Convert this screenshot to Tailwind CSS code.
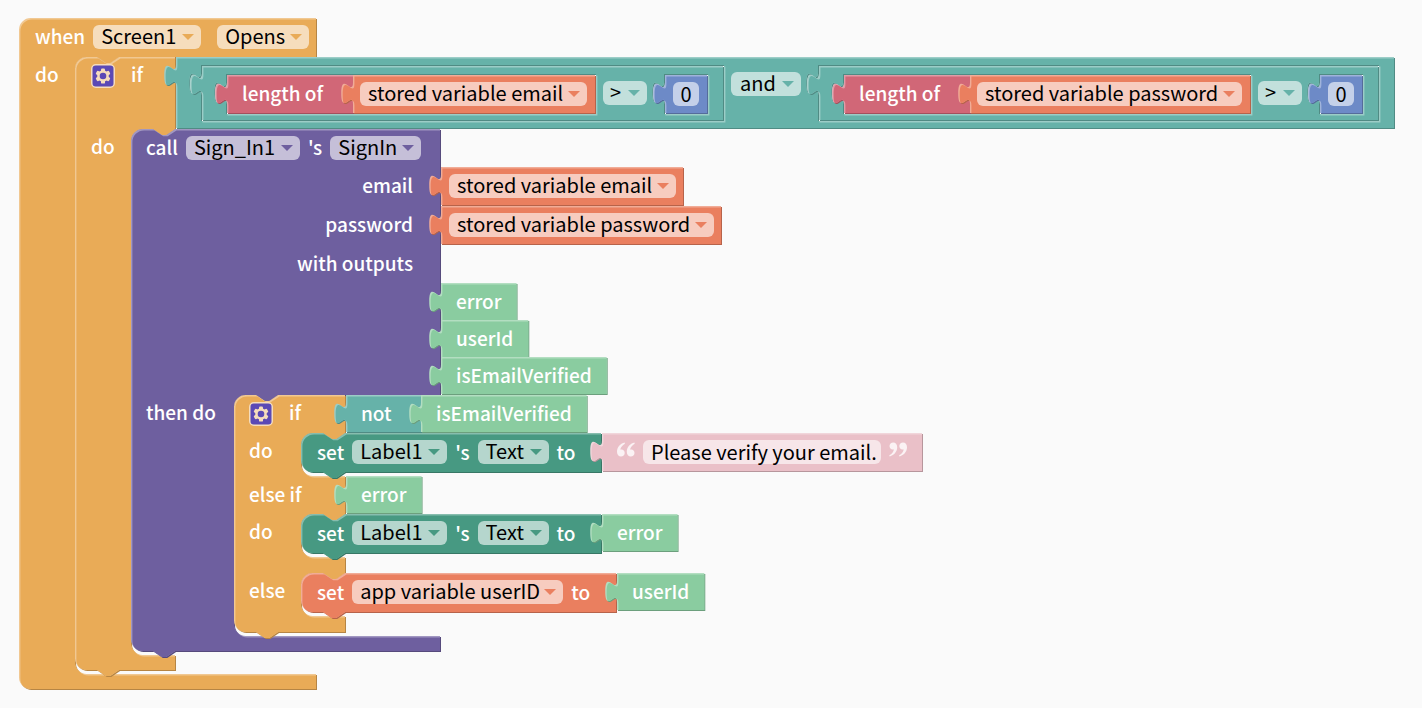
<!DOCTYPE html>
<html lang="en">
<head>
<meta charset="utf-8">
<title>Blocks workspace</title>
<script src="https://cdn.jsdelivr.net/npm/@tailwindcss/browser@4"></script>
</head>
<body class="min-h-screen bg-[#fafafa] font-['Noto_Sans_CJK_SC','Noto_Sans',sans-serif] text-[19px] leading-6 font-medium text-white">
<svg class="hidden" aria-hidden="true">
  <symbol id="caret" viewBox="0 0 12 6"><path d="M0 0H12L6 6Z" fill="currentColor"/></symbol>
  <symbol id="gear" viewBox="0 0 24 24">
    <rect x=".75" y=".75" width="22.5" height="22.5" rx="4" fill="#5b49b5" stroke="#f6ddbc" stroke-width="1.5"/>
    <g fill="#f6ddbc">
      <circle cx="12" cy="12" r="5.8"/>
      <g id="tooth"><rect x="10" y="4.400" width="4" height="15.200" rx="1.2"/></g>
      <use href="#tooth" transform="rotate(60 12 12)"/>
      <use href="#tooth" transform="rotate(120 12 12)"/>
    </g>
    <circle cx="12" cy="12" r="3.300" fill="#5b49b5"/>
  </symbol>
  <symbol id="quote" viewBox="0 0 18 15">
    <path d="M7.6.6C4 1.500 0 4.800 0 9.800C0 12.800 1.700 14.600 4 14.600C6.100 14.600 7.700 13.100 7.700 11C7.700 9 6.300 7.600 4.400 7.600C3.900 7.600 3.500 7.700 3.300 7.800C3.500 5.500 5.400 3 7.900 1.700Z" fill="currentColor"/>
    <path transform="translate(9.800)" d="M7.6.6C4 1.500 0 4.800 0 9.800C0 12.800 1.700 14.600 4 14.600C6.100 14.600 7.700 13.100 7.700 11C7.700 9 6.300 7.600 4.400 7.600C3.900 7.600 3.500 7.700 3.300 7.800C3.500 5.500 5.400 3 7.900 1.700Z" fill="currentColor"/>
  </symbol>
</svg>

<main class="px-[19px] pt-[18px]">
  <!-- when Screen1 Opens -->
  <section data-block="event" data-color="#e9ab57" class="relative isolate w-[297px]">
    <div class="flex h-[39px] items-center pb-0.5 pl-4">
      <span class="pb-0.5">when</span>
      <span class="relative ml-2 flex h-6 items-center rounded-md bg-white/60 text-[#e9ab57]"><select aria-label="Screen" class="h-8 appearance-none pr-6 pb-0.5 pl-2 text-[20px] leading-[30px] font-normal text-black"><option>Screen1</option></select><svg class="pointer-events-none absolute right-[7px] h-1.5 w-3"><use href="#caret"/></svg></span>
      <span class="relative ml-4 flex h-6 items-center rounded-md bg-white/60 text-[#e9ab57]"><select aria-label="Event" class="h-8 appearance-none pr-6 pb-0.5 pl-2 text-[20px] leading-[30px] font-normal text-black"><option>Opens</option></select><svg class="pointer-events-none absolute right-[7px] h-1.5 w-3"><use href="#caret"/></svg></span>
    </div>
    <div class="flex">
      <div class="h-[38px] w-14 shrink-0 pt-[5px] pl-4">do</div>
      <div data-slot class="shrink-0 pb-1">

        <!-- if stored values are present -->
        <section data-block="stack" data-color="#e9ab57" class="relative isolate w-[100px]">
          <div class="flex h-[72px]">
            <div class="flex w-full shrink-0 items-start pl-4">
              <button aria-label="Configure if block" class="mt-[7px] h-6 w-6"><svg class="h-6 w-6"><use href="#gear"/></svg></button>
              <span class="mt-[5px] ml-4">if</span>
            </div>
            <div data-block="value" data-color="#66b2a9" class="relative isolate ml-px flex h-[71px] shrink-0 items-start pt-[9px] pr-4 pl-[26px]">
              <div data-block="value" data-inline data-color="#66b2a9" class="relative isolate flex h-[54px] shrink-0 items-start pt-[9px] pr-4 pl-[25px]">
                <div data-inline class="flex h-[38px] shrink-0">
                  <div data-block="value" data-color="#d16777" class="relative isolate flex h-full w-[126px] shrink-0 items-center pb-0.5 pl-[15px]">length of</div>
                  <div data-block="value" data-color="#ea7f5f" class="relative isolate flex h-full shrink-0 items-center pr-2 pl-[7px]">
                    <span class="relative flex h-6 items-center rounded-md bg-white/60 text-[#ea7f5f]"><select aria-label="Stored variable" class="h-8 appearance-none pr-[23px] pb-0.5 pl-2 text-[20px] leading-[30px] font-normal text-black"><option>stored variable email</option></select><svg class="pointer-events-none absolute right-[7px] h-1.5 w-3"><use href="#caret"/></svg></span>
                  </div>
                </div>
                <span class="relative mt-1.5 ml-2 flex h-6 items-center rounded-md bg-white/60 text-[#66b2a9]"><select aria-label="Comparison" class="h-8 appearance-none pr-[25px] pb-0.5 pl-[7px] text-[20px] leading-[30px] font-normal text-black"><option>&gt;</option></select><svg class="pointer-events-none absolute right-[7px] h-1.5 w-3"><use href="#caret"/></svg></span>
                <div data-block="value" data-inline data-color="#6d8ac7" class="relative isolate ml-[18px] flex h-[38px] shrink-0 items-center px-2">
                  <span class="flex h-6 items-center rounded-md bg-white/60"><input aria-label="Number" value="0" class="h-8 w-[26px] pb-0.5 text-center text-[20px] leading-[30px] font-normal text-black"></span>
                </div>
              </div>
              <span class="relative mt-1.5 ml-2 flex h-6 items-center rounded-md bg-white/60 text-[#66b2a9]"><select aria-label="Logic operator" class="h-8 appearance-none pr-[25px] pb-0.5 pl-[9px] text-[20px] leading-[30px] font-normal text-black"><option>and</option></select><svg class="pointer-events-none absolute right-[7px] h-1.5 w-3"><use href="#caret"/></svg></span>
              <div data-block="value" data-inline data-color="#66b2a9" class="relative isolate ml-[18px] flex h-[54px] shrink-0 items-start pt-[9px] pr-4 pl-[25px]">
                <div data-inline class="flex h-[38px] shrink-0">
                  <div data-block="value" data-color="#d16777" class="relative isolate flex h-full w-[126px] shrink-0 items-center pb-0.5 pl-[15px]">length of</div>
                  <div data-block="value" data-color="#ea7f5f" class="relative isolate flex h-full shrink-0 items-center pr-2 pl-[7px]">
                    <span class="relative flex h-6 items-center rounded-md bg-white/60 text-[#ea7f5f]"><select aria-label="Stored variable" class="h-8 appearance-none pr-[23px] pb-0.5 pl-2 text-[20px] leading-[30px] font-normal text-black"><option>stored variable password</option></select><svg class="pointer-events-none absolute right-[7px] h-1.5 w-3"><use href="#caret"/></svg></span>
                  </div>
                </div>
                <span class="relative mt-1.5 ml-2 flex h-6 items-center rounded-md bg-white/60 text-[#66b2a9]"><select aria-label="Comparison" class="h-8 appearance-none pr-[25px] pb-0.5 pl-[7px] text-[20px] leading-[30px] font-normal text-black"><option>&gt;</option></select><svg class="pointer-events-none absolute right-[7px] h-1.5 w-3"><use href="#caret"/></svg></span>
                <div data-block="value" data-inline data-color="#6d8ac7" class="relative isolate ml-[18px] flex h-[38px] shrink-0 items-center px-2">
                  <span class="flex h-6 items-center rounded-md bg-white/60"><input aria-label="Number" value="0" class="h-8 w-[26px] pb-0.5 text-center text-[20px] leading-[30px] font-normal text-black"></span>
                </div>
              </div>
            </div>
          </div>
          <div class="flex">
            <div class="w-14 shrink-0 pt-[5px] pl-4">do</div>
            <div data-slot class="shrink-0 pb-1">

              <!-- call Sign_In1's SignIn -->
              <section data-block="stack" data-color="#6e5f9f" class="relative isolate w-[309px]">
                <div class="flex h-[38px] items-center pl-[15px]">
                  <span class="pb-0.5">call</span>
                  <span class="relative ml-2 flex h-6 items-center rounded-md bg-white/60 text-[#6e5f9f]"><select aria-label="Component" class="h-8 appearance-none pr-6 pb-0.5 pl-2 text-[20px] leading-[30px] font-normal text-black"><option>Sign_In1</option></select><svg class="pointer-events-none absolute right-[7px] h-1.5 w-3"><use href="#caret"/></svg></span>
                  <span class="ml-2 pb-0.5">'s</span>
                  <span class="relative ml-2 flex h-6 items-center rounded-md bg-white/60 text-[#6e5f9f]"><select aria-label="Method" class="h-8 appearance-none pr-6 pb-0.5 pl-2 text-[20px] leading-[30px] font-normal text-black"><option>SignIn</option></select><svg class="pointer-events-none absolute right-[7px] h-1.5 w-3"><use href="#caret"/></svg></span>
                </div>
                <div class="flex h-[39px]">
                  <div class="flex w-full shrink-0 items-center justify-end pr-[27px] pb-1">email</div>
                  <div data-block="value" data-color="#ea7f5f" class="relative isolate ml-px flex h-[38px] shrink-0 items-center pr-[7px] pl-2">
                    <span class="relative flex h-6 items-center rounded-md bg-white/60 text-[#ea7f5f]"><select aria-label="Email value" class="h-8 appearance-none pr-[23px] pb-0.5 pl-2 text-[20px] leading-[30px] font-normal text-black"><option>stored variable email</option></select><svg class="pointer-events-none absolute right-[7px] h-1.5 w-3"><use href="#caret"/></svg></span>
                  </div>
                </div>
                <div class="flex h-[39px]">
                  <div class="flex w-full shrink-0 items-center justify-end pr-[27px] pb-1">password</div>
                  <div data-block="value" data-color="#ea7f5f" class="relative isolate ml-px flex h-[38px] shrink-0 items-center pr-[7px] pl-2">
                    <span class="relative flex h-6 items-center rounded-md bg-white/60 text-[#ea7f5f]"><select aria-label="Password value" class="h-8 appearance-none pr-[23px] pb-0.5 pl-2 text-[20px] leading-[30px] font-normal text-black"><option>stored variable password</option></select><svg class="pointer-events-none absolute right-[7px] h-1.5 w-3"><use href="#caret"/></svg></span>
                  </div>
                </div>
                <div class="flex h-[38px] items-center justify-end pr-[27px] pb-0.5">with outputs</div>
                <div class="flex flex-col items-start pb-px pl-[310px]">
                  <div data-block="value" data-color="#8acca0" class="relative isolate flex h-[37px] shrink-0 items-center px-[15px] pb-0.5">error</div>
                  <div data-block="value" data-color="#8acca0" class="relative isolate flex h-[37px] shrink-0 items-center px-[15px] pb-0.5">userId</div>
                  <div data-block="value" data-color="#8acca0" class="relative isolate flex h-[37px] shrink-0 items-center px-[15px] pb-0.5">isEmailVerified</div>
                </div>
                <div class="flex">
                  <div class="w-[103px] shrink-0 pt-[5px] pl-[15px] whitespace-nowrap">then do</div>
                  <div data-slot class="shrink-0 pb-1">

                    <!-- if / else if / else -->
                    <section data-block="stack" data-color="#e9ab57" class="relative isolate w-[111px]">
                      <div class="flex h-[38px]">
                        <div class="flex w-full shrink-0 items-start pl-[15px]">
                          <button aria-label="Configure if block" class="mt-[7px] h-6 w-6"><svg class="h-6 w-6"><use href="#gear"/></svg></button>
                          <span class="mt-[5px] ml-4">if</span>
                        </div>
                        <div data-block="value" data-color="#66b2a9" class="relative isolate ml-px flex h-[37px] w-[75px] shrink-0 items-center pb-0.5 pl-[15px]">not</div>
                        <div data-block="value" data-color="#8acca0" class="relative isolate flex h-[37px] shrink-0 items-center px-[15px] pb-0.5">isEmailVerified</div>
                      </div>
                      <div class="flex">
                        <div class="w-[67px] shrink-0 pt-[5px] pl-[15px]">do</div>
                        <div data-slot class="shrink-0 pb-1">
                          <div class="flex">
                            <section data-block="stack" data-color="#479982" class="relative isolate flex h-[39px] w-[300px] shrink-0 items-center pb-0.5 pl-4">
                              <span>set</span>
                              <span class="relative ml-2 flex h-6 items-center rounded-md bg-white/60 text-[#479982]"><select aria-label="Component" class="h-8 appearance-none pr-6 pb-0.5 pl-2 text-[20px] leading-[30px] font-normal text-black"><option>Label1</option></select><svg class="pointer-events-none absolute right-[7px] h-1.5 w-3"><use href="#caret"/></svg></span>
                              <span class="ml-2">'s</span>
                              <span class="relative ml-2 flex h-6 items-center rounded-md bg-white/60 text-[#479982]"><select aria-label="Property" class="h-8 appearance-none pr-6 pb-0.5 pl-2 text-[20px] leading-[30px] font-normal text-black"><option>Text</option></select><svg class="pointer-events-none absolute right-[7px] h-1.5 w-3"><use href="#caret"/></svg></span>
                              <span class="ml-2">to</span>
                            </section>
                            <div data-block="value" data-color="#eac0c8" class="relative isolate ml-px flex h-[38px] shrink-0 items-center gap-2 px-[15px]">
                              <svg class="-mt-1.5 h-[15px] w-[18px] text-white/80"><use href="#quote"/></svg>
                              <span class="flex h-6 items-center rounded-md bg-white/60"><input aria-label="Text" value="Please verify your email." class="h-8 w-[238px] pb-0.5 pl-2 text-[20px] leading-[30px] font-normal text-black"></span>
                              <svg class="-mt-1.5 h-[15px] w-[18px] rotate-180 text-white/80"><use href="#quote"/></svg>
                            </div>
                          </div>
                        </div>
                      </div>
                      <div class="flex h-[38px]">
                        <div class="flex w-full shrink-0 items-center pb-0.5 pl-[15px] whitespace-nowrap">else if</div>
                        <div data-block="value" data-color="#8acca0" class="relative isolate ml-px flex h-[37px] shrink-0 items-center px-[15px] pb-0.5">error</div>
                      </div>
                      <div class="flex">
                        <div class="w-[67px] shrink-0 pt-[5px] pl-[15px]">do</div>
                        <div data-slot class="shrink-0 pb-1">
                          <div class="flex">
                            <section data-block="stack" data-color="#479982" class="relative isolate flex h-[39px] w-[300px] shrink-0 items-center pb-0.5 pl-4">
                              <span>set</span>
                              <span class="relative ml-2 flex h-6 items-center rounded-md bg-white/60 text-[#479982]"><select aria-label="Component" class="h-8 appearance-none pr-6 pb-0.5 pl-2 text-[20px] leading-[30px] font-normal text-black"><option>Label1</option></select><svg class="pointer-events-none absolute right-[7px] h-1.5 w-3"><use href="#caret"/></svg></span>
                              <span class="ml-2">'s</span>
                              <span class="relative ml-2 flex h-6 items-center rounded-md bg-white/60 text-[#479982]"><select aria-label="Property" class="h-8 appearance-none pr-6 pb-0.5 pl-2 text-[20px] leading-[30px] font-normal text-black"><option>Text</option></select><svg class="pointer-events-none absolute right-[7px] h-1.5 w-3"><use href="#caret"/></svg></span>
                              <span class="ml-2">to</span>
                            </section>
                            <div data-block="value" data-color="#8acca0" class="relative isolate ml-px flex h-[37px] shrink-0 items-center px-[15px] pb-0.5">error</div>
                          </div>
                        </div>
                      </div>
                      <div class="h-4"></div>
                      <div class="flex">
                        <div class="w-[67px] shrink-0 pt-[5px] pl-[15px]">else</div>
                        <div data-slot class="shrink-0 pb-1">
                          <div class="flex">
                            <section data-block="stack" data-color="#ea7f5f" class="relative isolate flex h-[39px] w-[315px] shrink-0 items-center pb-0.5 pl-4">
                              <span>set</span>
                              <span class="relative ml-2 flex h-6 items-center rounded-md bg-white/60 text-[#ea7f5f]"><select aria-label="App variable" class="h-8 appearance-none pr-[23px] pb-0.5 pl-2 text-[20px] leading-[30px] font-normal text-black"><option>app variable userID</option></select><svg class="pointer-events-none absolute right-[7px] h-1.5 w-3"><use href="#caret"/></svg></span>
                              <span class="ml-2">to</span>
                            </section>
                            <div data-block="value" data-color="#8acca0" class="relative isolate ml-px flex h-[37px] shrink-0 items-center px-[15px] pb-0.5">userId</div>
                          </div>
                        </div>
                      </div>
                      <div class="h-4"></div>
                    </section>
                  </div>
                </div>
                <div class="h-[15px]"></div>
              </section>
            </div>
          </div>
          <div class="h-[15px]"></div>
        </section>
      </div>
    </div>
    <div class="h-[15px]"></div>
  </section>
</main>

<script>
// Draws the outline of every block from its laid-out size.
const S = 1.47, R = 8 * S, NS = 'http://www.w3.org/2000/svg';
const n = (...v) => v.map(x => +(x * S).toFixed(2)).join(' ');
const NOTCH_LR = `l${n(6, 4)} h${n(3)} l${n(6, -4)}`;
const NOTCH_RL = `l${n(-6, 4)} h${n(-3)} l${n(-6, -4)}`;
const TAB_UP = `c${n(0, -10, -8, 8, -8, -7.5)} s${n(8, 2.5, 8, -7.5)}`;

const valuePath = (x, y, w, h) =>
  `M${x} ${y}H${x + w}V${y + h}H${x}V${y + 20 * S}${TAB_UP}V${y}Z`;

function stackPath(w, h, slots, hasNotch) {
  let d = `M0 ${R}A${R} ${R} 0 0 1 ${R} 0`;
  if (hasNotch) d += `H${15 * S}${NOTCH_LR}`;
  d += `H${w}`;
  for (const s of slots) {
    d += `V${s.top}H${s.left + 30 * S}${NOTCH_RL}H${s.left + R}`
       + `a${R} ${R} 0 0 0 ${-R} ${R}V${s.bottom - R}a${R} ${R} 0 0 0 ${R} ${R}H${w}`;
  }
  d += `V${h}`;
  if (hasNotch) d += `H${30 * S}${NOTCH_RL}`;
  return d + `H${R}A${R} ${R} 0 0 1 0 ${h - R}Z`;
}

function add(parent, name, attrs) {
  const el = document.createElementNS(NS, name);
  for (const k in attrs) el.setAttribute(k, attrs[k]);
  return parent.appendChild(el);
}

function drawBlock(block, i) {
  const b = block.getBoundingClientRect(), color = block.dataset.color;
  const own = el => el.parentElement.closest('[data-block]') === block;
  let d;
  if (block.dataset.block === 'value') {
    d = valuePath(0, 0, b.width, b.height);
    for (const el of block.querySelectorAll('[data-inline]')) {
      if (!own(el)) continue;
      const r = el.getBoundingClientRect();
      d += valuePath(r.left - b.left - 1, r.top - b.top - 1, r.width + 2, r.height + 2);
    }
  } else {
    const slots = [...block.querySelectorAll('[data-slot]')].filter(own).map(el => {
      const r = el.getBoundingClientRect();
      return { left: r.left - b.left, top: r.top - b.top, bottom: r.bottom - b.top };
    });
    d = stackPath(b.width, b.height, slots, block.dataset.block === 'stack');
  }
  block.querySelector(':scope > [data-outline]')?.remove();
  const svg = document.createElementNS(NS, 'svg');
  svg.setAttribute('class', 'pointer-events-none absolute inset-0 -z-10 h-full w-full overflow-visible');
  svg.setAttribute('data-outline', '');
  svg.setAttribute('aria-hidden', 'true');
  const clip = add(svg, 'clipPath', { id: 'outline' + i });
  add(clip, 'path', { d, 'clip-rule': 'evenodd' });
  add(svg, 'path', { d, 'fill-rule': 'evenodd', transform: 'translate(1 1)', style: `fill:color-mix(in srgb, ${color}, black 22%)` });
  add(svg, 'path', { d, 'fill-rule': 'evenodd', style: `fill:color-mix(in srgb, ${color}, white 35%)` });
  const g = add(svg, 'g', { 'clip-path': `url(#outline${i})` });
  add(g, 'path', { d, 'fill-rule': 'evenodd', fill: color, transform: 'translate(1.4 1.4)' });
  block.prepend(svg);
}

const blocks = [...document.querySelectorAll('[data-block]')];
const drawAll = () => blocks.forEach(drawBlock);
const watcher = new ResizeObserver(drawAll);
blocks.forEach(block => watcher.observe(block));
window.addEventListener('load', drawAll);
</script>
</body>
</html>
